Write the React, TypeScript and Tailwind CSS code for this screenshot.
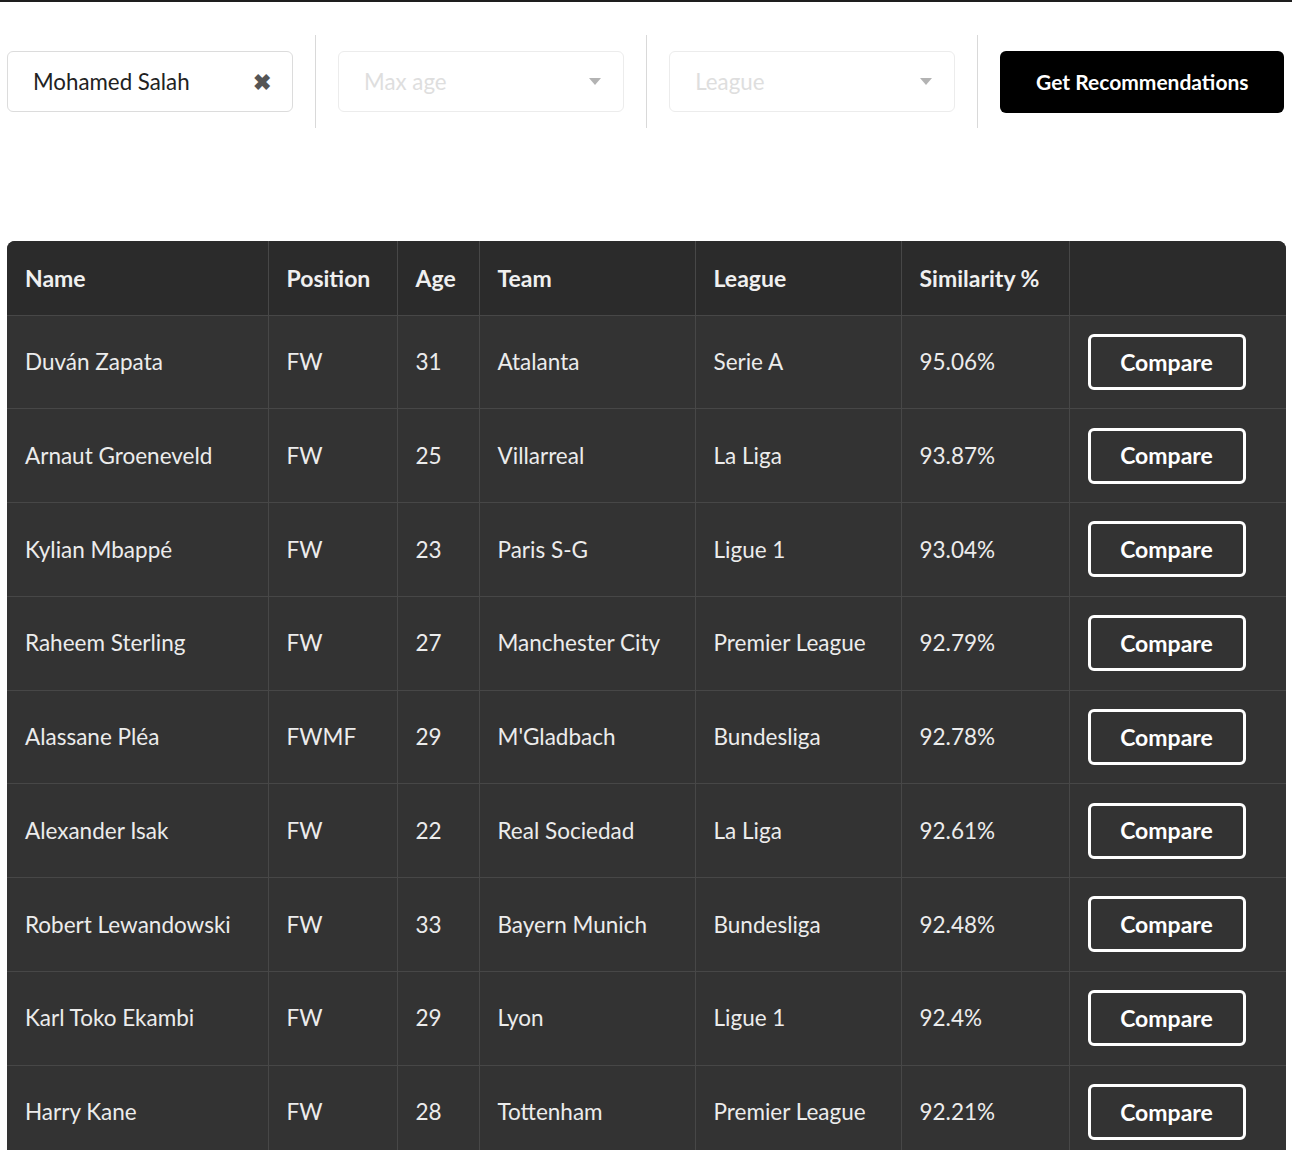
import React from "react";

const rows = [
  ["Duván Zapata", "FW", "31", "Atalanta", "Serie A", "95.06%"],
  ["Arnaut Groeneveld", "FW", "25", "Villarreal", "La Liga", "93.87%"],
  ["Kylian Mbappé", "FW", "23", "Paris S-G", "Ligue 1", "93.04%"],
  ["Raheem Sterling", "FW", "27", "Manchester City", "Premier League", "92.79%"],
  ["Alassane Pléa", "FWMF", "29", "M'Gladbach", "Bundesliga", "92.78%"],
  ["Alexander Isak", "FW", "22", "Real Sociedad", "La Liga", "92.61%"],
  ["Robert Lewandowski", "FW", "33", "Bayern Munich", "Bundesliga", "92.48%"],
  ["Karl Toko Ekambi", "FW", "29", "Lyon", "Ligue 1", "92.4%"],
  ["Harry Kane", "FW", "28", "Tottenham", "Premier League", "92.21%"],
];

const Caret = () => (
  <svg width="12" height="7" viewBox="0 0 12 7" className="shrink-0">
    <path d="M0 0 L12 0 L6 7 Z" fill="#b3b3b3" />
  </svg>
);

const Divider = () => <div className="w-px h-[93px] bg-[#d9d9d9] shrink-0" />;

export default function App() {
  return (
    <div className="min-h-[1150px] bg-white" style={{ fontFamily: "Lato, 'Noto Sans', sans-serif" }}>
      <div className="h-[2px] bg-[#1e1e1e]" />
      <div className="pl-[7px] pr-[6px]">
        <div className="flex items-center gap-[22.3px] pt-[33px]">
          <div className="w-[285.5px] shrink-0 h-[61px] rounded-[6px] border border-[#dcdcdc] flex items-center justify-between pl-[25px] pr-[21px]">
            <span className="text-[22.3px] text-[#222]">Mohamed Salah</span>
            <span className="text-[22px] leading-none text-[#555] font-bold">✖</span>
          </div>
          <Divider />
          <div className="w-[285.5px] shrink-0 h-[61px] rounded-[6px] border border-[#ececec] flex items-center justify-between pl-[25px] pr-[22px]">
            <span className="text-[22.3px] text-[#dedede]">Max age</span>
            <Caret />
          </div>
          <Divider />
          <div className="w-[285.5px] shrink-0 h-[61px] rounded-[6px] border border-[#ececec] flex items-center justify-between pl-[25px] pr-[22px]">
            <span className="text-[22.3px] text-[#dedede]">League</span>
            <Caret />
          </div>
          <Divider />
          <button className="w-[284px] shrink-0 h-[62px] rounded-[6px] bg-black text-white text-[21px] font-bold">
            Get Recommendations
          </button>
        </div>

        <div className="mt-[113px] rounded-t-[8px] overflow-hidden bg-[#333333]">
          <table className="w-full table-fixed border-collapse text-[22.5px]">
            <colgroup>
              <col className="w-[261px]" />
              <col className="w-[129px]" />
              <col className="w-[82px]" />
              <col className="w-[216px]" />
              <col className="w-[206px]" />
              <col className="w-[168px]" />
              <col />
            </colgroup>
            <thead>
              <tr className="h-[74px] bg-[#2b2b2b]">
                {["Name", "Position", "Age", "Team", "League", "Similarity %", ""].map((h, i) => (
                  <th
                    key={i}
                    className="text-left text-[23px] font-bold text-[#f0f0f0] px-[18px] border-l border-b border-[#474747] first:border-l-0"
                  >
                    {h}
                  </th>
                ))}
              </tr>
            </thead>
            <tbody>
              {rows.map((r, ri) => (
                <tr key={ri} className="h-[93.75px]">
                  {r.map((c, ci) => (
                    <td
                      key={ci}
                      className="px-[18px] text-[#ececec] border-l border-b border-[#474747] first:border-l-0"
                    >
                      {c}
                    </td>
                  ))}
                  <td className="px-[18px] border-l border-b border-[#474747]">
                    <button className="w-[158px] h-[56px] rounded-[6px] border-[3px] border-white text-white font-bold text-[23px]">
                      Compare
                    </button>
                  </td>
                </tr>
              ))}
            </tbody>
          </table>
        </div>
      </div>
    </div>
  );
}
